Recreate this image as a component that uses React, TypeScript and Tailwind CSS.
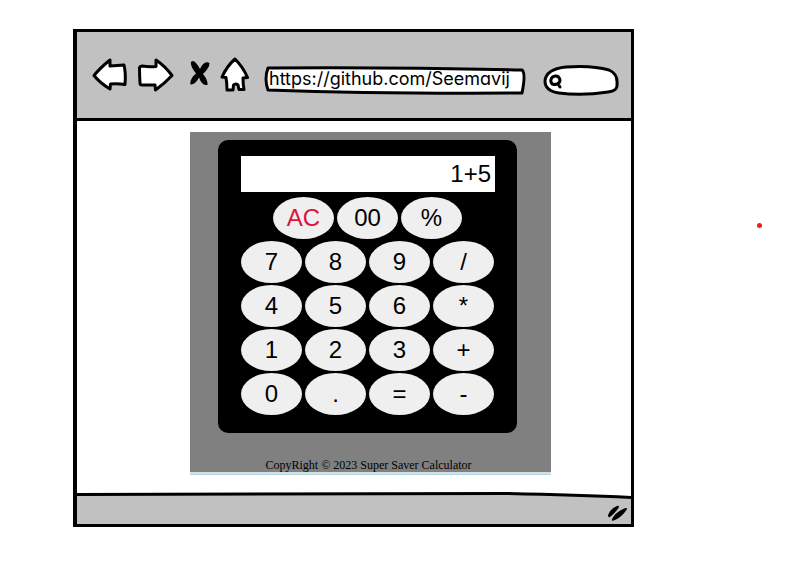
import { useState } from "react";

const topKeys = ["AC", "00", "%"];
const keys = ["7", "8", "9", "/", "4", "5", "6", "*", "1", "2", "3", "+", "0", ".", "=", "-"];

function Key({ label, onPress }: { label: string; onPress: (label: string) => void }) {
  return (
    <button
      type="button"
      onClick={() => onPress(label)}
      className={`h-[42px] w-[61px] rounded-[50%] bg-[#efefef] text-2xl ${label === "AC" ? "text-[#dc143c]" : "text-black"}`}
    >
      {label}
    </button>
  );
}

function Toolbar() {
  return (
    <header className="flex items-start border-b-[3px] border-black bg-[#c1c1c1] pt-[25px] pr-3 pb-[21px] pl-[15px]">
      <button type="button" aria-label="Back" className="mr-[10px]">
        <svg width="36" height="36" viewBox="0 0 36 36" fill="white" stroke="black" strokeWidth="3" strokeLinejoin="round">
          <path d="M2 18.500 Q8 11 18 3 L18 9 Q25 8.500 32 8 Q34 16 33 27.500 Q26 26.500 18.500 27 L18 32 Q8 26 2 18.500Z" />
        </svg>
      </button>
      <button type="button" aria-label="Forward" className="mr-[14px]">
        <svg width="38" height="36" viewBox="0 0 38 36" fill="white" stroke="black" strokeWidth="3" strokeLinejoin="round">
          <path d="M1.500 10.500 Q2 9 4 9 Q11 10 18 9.500 L18 3 Q27 9 34 18.500 Q26 27 17.500 33 L17 28 L4 28 Q2 28 2 26 Q1.500 18 1.500 10.500Z" />
        </svg>
      </button>
      <button type="button" aria-label="Stop" className="mr-[10px]">
        <svg width="20" height="36" viewBox="0 0 20 36" fill="black">
          <path d="M1 5 Q4 1 10 12 Q14 3 19.500 6 Q19.500 11 13 17 Q18 23 17.500 28 Q12 29 9 20.500 Q5 28 0.500 27.500 Q-0.500 22 6 16.500 Q0 9 1 5Z" />
        </svg>
      </button>
      <button type="button" aria-label="Home" className="mr-[14px]">
        <svg width="30" height="36" viewBox="0 0 30 36" fill="white" stroke="black" strokeWidth="3" strokeLinejoin="round">
          <path d="M15 2 Q23 10 27.500 20.500 L23 21 Q23 27 24 32.500 L19 32.500 L18 28 Q15.500 26 13.500 28 L13 33 L7 33 Q7 26 6 20.500 L2 20 Q7 9 15 2Z" />
        </svg>
      </button>
      <div className="relative h-10 min-w-0 flex-1">
        <svg className="absolute inset-0 h-full w-full" viewBox="0 0 264 40" preserveAspectRatio="none" fill="white" stroke="black" strokeWidth="3" strokeLinejoin="round">
          <path d="M4 11 Q130 10 259 13 Q263 16 259 36 Q120 37 4 33 Q0 22 4 11Z" />
        </svg>
        <input
          type="text"
          aria-label="Address"
          defaultValue="https://github.com/Seemavij"
          className="relative mt-2 block h-7 w-full bg-transparent pl-[5px] font-['Inter',sans-serif] text-[18px] leading-7 text-black [font-feature-settings:'cv11'] outline-none"
        />
      </div>
      <div className="relative ml-4 h-10 w-[76px] shrink-0">
        <svg className="absolute inset-0 h-full w-full" viewBox="0 0 76 40" fill="white" stroke="black" strokeWidth="3" strokeLinecap="round">
          <path d="M2 24 Q3 12 23 10 Q49 8 66 13 Q75 17 74 27 Q75 34 65 35 Q39 39 16 36 Q2 34 2 24Z" />
          <path d="M17 23 Q16 18.500 12 19 Q7 20 8 25 Q9 28.500 14 27 Q17 26 17 23 M15 27 L17 30" />
        </svg>
        <input
          type="search"
          aria-label="Search"
          className="relative mt-2 block h-7 w-full bg-transparent pr-2 pl-6 text-sm outline-none"
        />
      </div>
    </header>
  );
}

function Calculator() {
  const [value, setValue] = useState("1+5");
  const press = (label: string) => {
    if (label === "AC") setValue("");
    else if (label !== "=") setValue((v) => v + label);
  };
  return (
    <section className="flex w-[361px] flex-col border-b border-[#add8e6] bg-[#808080]">
      <div className="mt-2 ml-7 w-[299px] rounded-[10px] bg-black px-[22px] pt-4 pb-[18px]">
        <input
          type="text"
          aria-label="Display"
          value={value}
          readOnly
          className="ml-px block h-9 w-[254px] bg-white px-1 text-right text-2xl text-black outline-none"
        />
        <div className="mt-[5px] flex justify-center gap-[3px]">
          {topKeys.map((k) => (
            <Key key={k} label={k} onPress={press} />
          ))}
        </div>
        <div className="mt-[2px] flex flex-wrap justify-center gap-x-[3px] gap-y-[2px]">
          {keys.map((k) => (
            <Key key={k} label={k} onPress={press} />
          ))}
        </div>
      </div>
      <p className="mt-[25px] pr-1 text-center font-['Liberation_Serif',serif] text-xs leading-[14px] text-black">
        CopyRight © 2023 Super Saver Calculator
      </p>
      <div className="h-[2px] bg-[#dddddd]" />
    </section>
  );
}

export default function App() {
  return (
    <main className="flex min-h-screen items-start bg-white pt-[29px] pr-[45px] pl-[73px] font-['Liberation_Sans',Arial,sans-serif]">
      <div className="max-w-[561px] min-w-0 flex-1 border-[3px] border-l-4 border-black bg-white">
        <Toolbar />
        <div className="pt-[11px] pb-[17px] pl-[113px]">
          <Calculator />
        </div>
        <footer>
          <svg className="block h-8 w-full" viewBox="0 0 554 32" preserveAspectRatio="none">
            <path d="M0 2.500 Q280 2 430 1.500 Q500 3 554 5.500 V32 H0Z" fill="#c1c1c1" />
            <path d="M0 2.500 Q280 2 430 1.500 Q500 3 554 5.500" fill="none" stroke="black" strokeWidth="3" />
            <path d="M531 23 Q533 17 540 14 Q544 13 540 18 Q536 23 533 25 Q531 26 531 23Z M535 27 Q538 21 546 17 Q553 14 548 20 Q543 26 538 28 Q534 30 535 27Z" fill="black" />
          </svg>
        </footer>
      </div>
      <span className="mt-[194px] ml-[123px] h-[5px] w-[5px] shrink-0 rounded-full bg-[#ee1c1c]" />
    </main>
  );
}
